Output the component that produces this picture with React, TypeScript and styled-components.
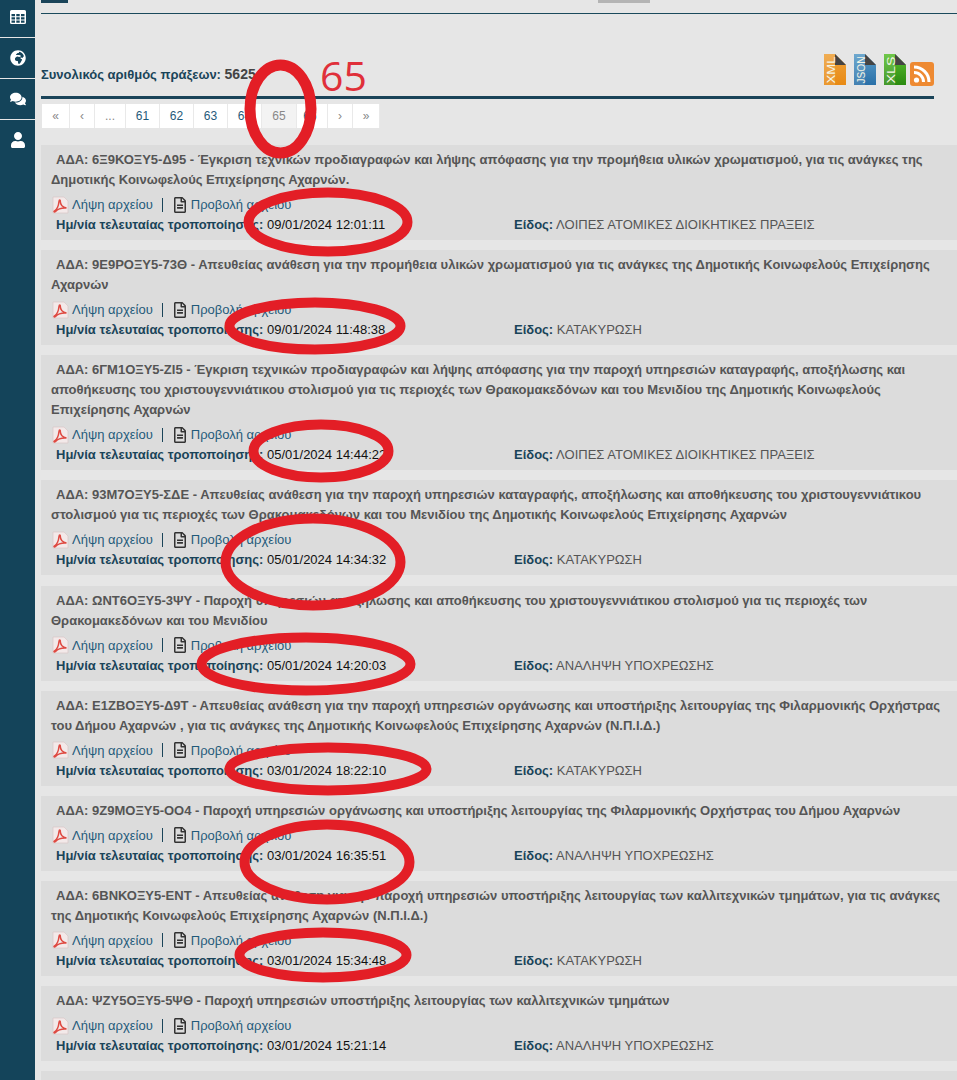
import { createGlobalStyle, styled } from "styled-components";
import { FaComments, FaGlobeAfrica, FaRegFileAlt, FaUser } from "react-icons/fa";

const GlobalStyle = createGlobalStyle`
  html, body {
    margin: 0;
    height: 1080px;
    overflow: hidden;
    background: #e6e6e6;
    font-family: "Liberation Sans", Arial, sans-serif;
  }
`;

const Shell = styled.div`
  position: relative;
  display: flex;
  width: 957px;
  height: 1080px;
  overflow: hidden;
`;

const Sidebar = styled.nav`
  flex: 0 0 35px;
  background: #14445a;
  display: flex;
  flex-direction: column;
  margin-top: -3px;
`;

const SideItem = styled.div`
  height: 40px;
  display: flex;
  align-items: center;
  justify-content: center;
  border-bottom: 1px solid #e6e6e6;
  color: #fff;
  font-size: 16px;

  &:last-child {
    border-bottom: 0;
  }
`;

const Main = styled.main`
  flex: 1;
  padding-left: 6px;
  min-width: 0;
`;

const TopTabs = styled.div`
  height: 13px;
  border-bottom: 1px solid #1a4a5c;
  display: flex;
  align-items: flex-start;
`;

const TopTab = styled.div<{ $color: string; $width: number; $gap: number }>`
  width: ${(p) => p.$width}px;
  height: 3px;
  margin-left: ${(p) => p.$gap}px;
  background: ${(p) => p.$color};
`;

const Head = styled.div`
  margin-top: 39px;
  width: 893px;
  height: 43px;
  border-bottom: 3px solid #1a4459;
  display: flex;
  justify-content: space-between;
  align-items: flex-end;
`;

const Total = styled.div`
  font-size: 13px;
  font-weight: bold;
  color: #1a4459;
  padding-bottom: 14px;

  b {
    color: #444;
    font-size: 14px;
  }
`;

const Exports = styled.div`
  display: flex;
  align-items: flex-end;
  padding-bottom: 10px;
`;

const ExportSlot = styled.span<{ $gap: number }>`
  display: flex;
  margin-left: ${(p) => p.$gap}px;
`;

const Pager = styled.div`
  display: flex;
  margin-top: 5px;
  margin-left: 1px;
  margin-bottom: 17px;
  height: 24px;
`;

const PageCell = styled.span<{ $w: number; $active?: boolean; $muted?: boolean; $inset?: number }>`
  width: ${(p) => p.$w}px;
  box-sizing: border-box;
  padding-right: ${(p) => p.$inset ?? 0}px;
  background: ${(p) => (p.$active ? "#f3f3f3" : "#fff")};
  border-right: 1px solid #e9e9e9;
  color: ${(p) => (p.$active || p.$muted ? "#888" : "#1f5a7a")};
  font-size: 12px;
  display: flex;
  align-items: center;
  justify-content: center;
`;

const Card = styled.article`
  width: 916px;
  margin-bottom: 10.15px;
  background: #dcdcdc;
  box-sizing: border-box;
  padding: 5px 10px 5px 10px;
`;

const Title = styled.div`
  font-size: 13px;
  font-weight: bold;
  line-height: 20px;
  color: #555;
  text-indent: 5px;
`;

const Links = styled.div`
  display: flex;
  align-items: center;
  height: 19px;
  margin-top: 5px;
  font-size: 13px;
  color: #1f5a7a;
  padding-left: 1px;
`;

const LinkLabel = styled.span<{ $gap: number }>`
  margin-left: ${(p) => p.$gap}px;
`;

const Divider = styled.span`
  width: 1px;
  height: 14px;
  background: #1a4459;
  margin: 0 9px;
`;

const FileGlyph = styled(FaRegFileAlt)`
  color: #333;
  font-size: 16px;
`;

const Meta = styled.div`
  display: grid;
  grid-template-columns: 458px 1fr;
  height: 21px;
  align-items: center;
  padding-left: 5px;
  font-size: 13px;
`;

const MetaField = styled.div`
  color: #444;

  b {
    color: #1a4459;
  }
`;

const MetaDate = styled.span`
  color: #111;
`;

const MetaKind = styled.span`
  color: #555;
`;

const Annotations = styled.svg`
  position: absolute;
  left: 0;
  top: 0;
  pointer-events: none;
`;

const RedNumber = styled.div`
  position: absolute;
  left: 320px;
  top: 52px;
  font-family: "Open Sans", sans-serif;
  font-size: 41px;
  line-height: 46px;
  color: #e0303a;
`;

const TableIcon = () => (
  <svg width="16" height="14" viewBox="0 0 16 14">
    <path
      fillRule="evenodd"
      fill="#fff"
      d="M1.500 0h13A1.500 1.500 0 0 1 16 1.500v11a1.500 1.500 0 0 1-1.500 1.500h-13A1.500 1.500 0 0 1 0 12.500v-11A1.500 1.500 0 0 1 1.500 0zM1.500 4v2.300h3.500V4zM6.300 4v2.300h3.400V4zM11 4v2.300h3.500V4zM1.500 7.300v2.200h3.500V7.300zM6.300 7.300v2.200h3.400V7.300zM11 7.300v2.200h3.500V7.300zM1.500 10.500v2.200h3.500v-2.200zM6.300 10.500v2.200h3.400v-2.200zM11 10.500v2.200h3.500v-2.200z"
    />
  </svg>
);

const PdfIcon = () => (
  <svg width="17" height="18" viewBox="0 0 17 18">
    <path d="M1 1h11l4 4v12H1z" fill="#f3e9e9" stroke="#d8c6c6" strokeWidth="0.7" />
    <path
      d="M2 15.500c2.500-1.500 4.500-5 5-10 .2-2 1.300-2 1.300-.2 0 3 1.500 5.700 6.200 6.700-4.200-.3-8.500.7-11 3.500-.8.800-1.500.5-1.500 0z"
      fill="none"
      stroke="#de4a42"
      strokeWidth="1.500"
    />
  </svg>
);

const ExportIcon = ({ label, top, bottom }: { label: string; top: string; bottom: string }) => (
  <svg width="24" height="32" viewBox="0 0 24 32">
    <defs>
      <linearGradient id={`g-${label}`} x1="0" y1="0" x2="0" y2="1">
        <stop offset="0" stopColor={top} />
        <stop offset="1" stopColor={bottom} />
      </linearGradient>
    </defs>
    <path d="M1 0h11l11 11v20H1z" fill={`url(#g-${label})`} />
    <path d="M1 0h11v31H1z" fill="#fff" opacity="0.12" />
    <path d="M12 0l11 11H12z" fill="#444" />
    <text
      transform="translate(12 29.500) rotate(-90)"
      fontFamily="Liberation Sans, sans-serif"
      fontSize="11"
      textLength="27"
      lengthAdjust="spacingAndGlyphs"
      fill="#f4f4e4"
    >
      {label}
    </text>
  </svg>
);

const RssIcon = () => (
  <svg width="24" height="24" viewBox="0 0 24 24">
    <rect width="24" height="24" rx="3" fill="#ee8a32" />
    <circle cx="6.500" cy="18" r="2.600" fill="#fff" />
    <path d="M4 10.500a9.500 9.500 0 0 1 9.500 9.500M4 5a15 15 0 0 1 15 15" fill="none" stroke="#fff" strokeWidth="3" />
  </svg>
);

const pages = [
  { t: "«", w: 28, muted: true },
  { t: "‹", w: 25, muted: true },
  { t: "...", w: 31, muted: true },
  { t: "61", w: 34 },
  { t: "62", w: 34 },
  { t: "63", w: 34 },
  { t: "64", w: 34 },
  { t: "65", w: 35, active: true },
  { t: "66", w: 31, inset: 4 },
  { t: "›", w: 25, muted: true },
  { t: "»", w: 27, muted: true },
];

const records = [
  {
    title:
      "ΑΔΑ: 6Ξ9ΚΟΞΥ5-Δ95 - Έγκριση τεχνικών προδιαγραφών και λήψης απόφασης για την προμήθεια υλικών χρωματισμού, για τις ανάγκες της Δημοτικής Κοινωφελούς Επιχείρησης Αχαρνών.",
    date: "09/01/2024 12:01:11",
    kind: "ΛΟΙΠΕΣ ΑΤΟΜΙΚΕΣ ΔΙΟΙΚΗΤΙΚΕΣ ΠΡΑΞΕΙΣ",
  },
  {
    title:
      "ΑΔΑ: 9Ε9ΡΟΞΥ5-73Θ - Απευθείας ανάθεση για την προμήθεια υλικών χρωματισμού για τις ανάγκες της Δημοτικής Κοινωφελούς Επιχείρησης Αχαρνών",
    date: "09/01/2024 11:48:38",
    kind: "ΚΑΤΑΚΥΡΩΣΗ",
  },
  {
    title:
      "ΑΔΑ: 6ΓΜ1ΟΞΥ5-ΖΙ5 - Έγκριση τεχνικών προδιαγραφών και λήψης απόφασης για την παροχή υπηρεσιών καταγραφής, αποξήλωσης και αποθήκευσης του χριστουγεννιάτικου στολισμού για τις περιοχές των Θρακομακεδόνων και του Μενιδίου της Δημοτικής Κοινωφελούς Επιχείρησης Αχαρνών",
    date: "05/01/2024 14:44:22",
    kind: "ΛΟΙΠΕΣ ΑΤΟΜΙΚΕΣ ΔΙΟΙΚΗΤΙΚΕΣ ΠΡΑΞΕΙΣ",
  },
  {
    title:
      "ΑΔΑ: 93Μ7ΟΞΥ5-ΣΔΕ - Απευθείας ανάθεση για την παροχή υπηρεσιών καταγραφής, αποξήλωσης και αποθήκευσης του χριστουγεννιάτικου στολισμού για τις περιοχές των Θρακομακεδόνων και του Μενιδίου της Δημοτικής Κοινωφελούς Επιχείρησης Αχαρνών",
    date: "05/01/2024 14:34:32",
    kind: "ΚΑΤΑΚΥΡΩΣΗ",
  },
  {
    title:
      "ΑΔΑ: ΩΝΤ6ΟΞΥ5-3ΨΥ - Παροχή υπηρεσιών αποξήλωσης και αποθήκευσης του χριστουγεννιάτικου στολισμού για τις περιοχές των Θρακομακεδόνων και του Μενιδίου",
    date: "05/01/2024 14:20:03",
    kind: "ΑΝΑΛΗΨΗ ΥΠΟΧΡΕΩΣΗΣ",
  },
  {
    title:
      "ΑΔΑ: Ε1ΖΒΟΞΥ5-Δ9Τ - Απευθείας ανάθεση για την παροχή υπηρεσιών οργάνωσης και υποστήριξης λειτουργίας της Φιλαρμονικής Ορχήστρας του Δήμου Αχαρνών , για τις ανάγκες της Δημοτικής Κοινωφελούς Επιχείρησης Αχαρνών (Ν.Π.Ι.Δ.)",
    date: "03/01/2024 18:22:10",
    kind: "ΚΑΤΑΚΥΡΩΣΗ",
  },
  {
    title:
      "ΑΔΑ: 9Ζ9ΜΟΞΥ5-ΟΟ4 - Παροχή υπηρεσιών οργάνωσης και υποστήριξης λειτουργίας της Φιλαρμονικής Ορχήστρας του Δήμου Αχαρνών",
    date: "03/01/2024 16:35:51",
    kind: "ΑΝΑΛΗΨΗ ΥΠΟΧΡΕΩΣΗΣ",
  },
  {
    title:
      "ΑΔΑ: 6ΒΝΚΟΞΥ5-ΕΝΤ - Απευθείας ανάθεση για την παροχή υπηρεσιών υποστήριξης λειτουργίας των καλλιτεχνικών τμημάτων, για τις ανάγκες της Δημοτικής Κοινωφελούς Επιχείρησης Αχαρνών (Ν.Π.Ι.Δ.)",
    date: "03/01/2024 15:34:48",
    kind: "ΚΑΤΑΚΥΡΩΣΗ",
  },
  {
    title:
      "ΑΔΑ: ΨΖΥ5ΟΞΥ5-5ΨΘ - Παροχή υπηρεσιών υποστήριξης λειτουργίας των καλλιτεχνικών τμημάτων",
    date: "03/01/2024 15:21:14",
    kind: "ΑΝΑΛΗΨΗ ΥΠΟΧΡΕΩΣΗΣ",
  },
];

// cx, cy, rx, ry, stroke of the hand-drawn marks over the list
const rings = [
  [280.5, 109, 30.5, 44, 11],
  [328, 222, 79.5, 29.5, 10],
  [315, 326, 85.5, 23.5, 10],
  [321, 451, 67.5, 26.5, 10],
  [313, 562, 87.5, 43.5, 10],
  [306, 664, 104.5, 26.5, 10],
  [328, 769, 98.5, 21.5, 10],
  [327, 862, 82.5, 37.5, 10],
  [323, 955, 83.5, 22.5, 10],
];

export default function App() {
  return (
    <Shell>
      <GlobalStyle />
      <Sidebar>
        <SideItem>
          <TableIcon />
        </SideItem>
        <SideItem>
          <FaGlobeAfrica />
        </SideItem>
        <SideItem>
          <FaComments />
        </SideItem>
        <SideItem>
          <FaUser />
        </SideItem>
      </Sidebar>
      <Main>
        <TopTabs>
          <TopTab $color="#1a4459" $width={27} $gap={0} />
          <TopTab $color="#b4b4b4" $width={52} $gap={530} />
        </TopTabs>
        <Head>
          <Total>
            Συνολικός αριθμός πράξεων: <b>5625</b>
          </Total>
          <Exports>
            <ExportSlot $gap={0}>
              <ExportIcon label="XML" top="#eea23c" bottom="#e88a14" />
            </ExportSlot>
            <ExportSlot $gap={6}>
              <ExportIcon label="JSON" top="#5a9cc8" bottom="#2a70a8" />
            </ExportSlot>
            <ExportSlot $gap={6}>
              <ExportIcon label="XLS" top="#5cc030" bottom="#2a8a10" />
            </ExportSlot>
            <ExportSlot $gap={3}>
              <RssIcon />
            </ExportSlot>
          </Exports>
        </Head>
        <Pager>
          {pages.map((p) => (
            <PageCell key={p.t} $w={p.w} $active={p.active} $muted={p.muted} $inset={p.inset}>
              {p.t}
            </PageCell>
          ))}
        </Pager>
        {records.map((r) => (
          <Card key={r.date}>
            <Title>{r.title}</Title>
            <Links>
              <PdfIcon />
              <LinkLabel $gap={3}>Λήψη αρχείου</LinkLabel>
              <Divider />
              <FileGlyph />
              <LinkLabel $gap={3}>Προβολή αρχείου</LinkLabel>
            </Links>
            <Meta>
              <MetaField>
                <b>Ημ/νία τελευταίας τροποποίησης:</b> <MetaDate>{r.date}</MetaDate>
              </MetaField>
              <MetaField>
                <b>Είδος:</b> <MetaKind>{r.kind}</MetaKind>
              </MetaField>
            </Meta>
          </Card>
        ))}
        <Card />
      </Main>
      <RedNumber>65</RedNumber>
      <Annotations width="957" height="1080" viewBox="0 0 957 1080">
        {rings.map(([cx, cy, rx, ry, sw]) => (
          <ellipse
            key={cy}
            cx={cx}
            cy={cy}
            rx={rx}
            ry={ry}
            fill="none"
            stroke="#e31e26"
            strokeWidth={sw}
          />
        ))}
      </Annotations>
    </Shell>
  );
}
